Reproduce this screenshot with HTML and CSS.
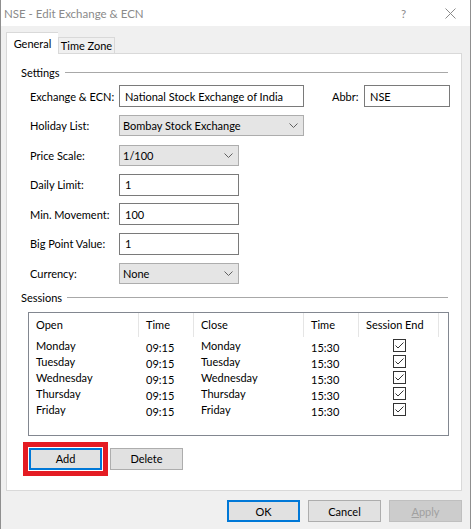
FILE: index.html
```html
<!DOCTYPE html>
<html>
<head>
<meta charset="utf-8">
<link rel="stylesheet" href="styles.css">
</head>
<body>
<div class="window">
  <div class="titlebar">
    <span class="title">NSE - Edit Exchange &amp; ECN</span>
    <span class="help">?</span>
    <span class="close"><svg width="11" height="11" viewBox="0 0 11 11"><path d="M0.5 0.5 L10.5 10.5 M10.5 0.5 L0.5 10.5" stroke="#8a8a8a" stroke-width="1" fill="none"/></svg></span>
  </div>
  <div class="tabs">
    <div class="tab active">General</div>
    <div class="tab">Time Zone</div>
  </div>
  <div class="panel">
    <div class="group-head"><span>Settings</span><span class="rule"></span></div>
    <div class="form">
      <div class="row">
        <label class="lbl">Exchange &amp; ECN:</label>
        <div class="field wide">National Stock Exchange of India</div>
        <label class="abbr-lbl">Abbr:</label>
        <div class="field abbr">NSE</div>
      </div>
      <div class="row">
        <label class="lbl">Holiday List:</label>
        <div class="combo wide"><span>Bombay Stock Exchange</span><svg width="9" height="5" viewBox="0 0 9 5"><path d="M0.5 0.5 L4.5 4.5 L8.5 0.5" stroke="#606060" fill="none"/></svg></div>
      </div>
      <div class="row">
        <label class="lbl">Price Scale:</label>
        <div class="combo narrow"><span>1/100</span><svg width="9" height="5" viewBox="0 0 9 5"><path d="M0.5 0.5 L4.5 4.5 L8.5 0.5" stroke="#606060" fill="none"/></svg></div>
      </div>
      <div class="row">
        <label class="lbl">Daily Limit:</label>
        <div class="field narrow">1</div>
      </div>
      <div class="row">
        <label class="lbl">Min. Movement:</label>
        <div class="field narrow">100</div>
      </div>
      <div class="row">
        <label class="lbl">Big Point Value:</label>
        <div class="field narrow">1</div>
      </div>
      <div class="row">
        <label class="lbl">Currency:</label>
        <div class="combo narrow"><span>None</span><svg width="9" height="5" viewBox="0 0 9 5"><path d="M0.5 0.5 L4.5 4.5 L8.5 0.5" stroke="#606060" fill="none"/></svg></div>
      </div>
    </div>
    <div class="group-head sessions-head"><span>Sessions</span><span class="rule"></span></div>
    <div class="table">
      <div class="thead">
        <div class="th">Open</div>
        <div class="th">Time</div>
        <div class="th">Close</div>
        <div class="th">Time</div>
        <div class="th">Session End</div>
      </div>
      <div class="tr"><div class="td">Monday</div><div class="td t">09:15</div><div class="td">Monday</div><div class="td t">15:30</div><div class="td c"><svg class="cb" width="13" height="13" viewBox="0 0 13 13"><rect x="0.5" y="0.5" width="12" height="12" fill="#fff" stroke="#333"/><path d="M2.5 6.5 L5 9 L10.5 3.5" stroke="#333" fill="none"/></svg></div></div>
      <div class="tr"><div class="td">Tuesday</div><div class="td t">09:15</div><div class="td">Tuesday</div><div class="td t">15:30</div><div class="td c"><svg class="cb" width="13" height="13" viewBox="0 0 13 13"><rect x="0.5" y="0.5" width="12" height="12" fill="#fff" stroke="#333"/><path d="M2.5 6.5 L5 9 L10.5 3.5" stroke="#333" fill="none"/></svg></div></div>
      <div class="tr"><div class="td">Wednesday</div><div class="td t">09:15</div><div class="td">Wednesday</div><div class="td t">15:30</div><div class="td c"><svg class="cb" width="13" height="13" viewBox="0 0 13 13"><rect x="0.5" y="0.5" width="12" height="12" fill="#fff" stroke="#333"/><path d="M2.5 6.5 L5 9 L10.5 3.5" stroke="#333" fill="none"/></svg></div></div>
      <div class="tr"><div class="td">Thursday</div><div class="td t">09:15</div><div class="td">Thursday</div><div class="td t">15:30</div><div class="td c"><svg class="cb" width="13" height="13" viewBox="0 0 13 13"><rect x="0.5" y="0.5" width="12" height="12" fill="#fff" stroke="#333"/><path d="M2.5 6.5 L5 9 L10.5 3.5" stroke="#333" fill="none"/></svg></div></div>
      <div class="tr"><div class="td">Friday</div><div class="td t">09:15</div><div class="td">Friday</div><div class="td t">15:30</div><div class="td c"><svg class="cb" width="13" height="13" viewBox="0 0 13 13"><rect x="0.5" y="0.5" width="12" height="12" fill="#fff" stroke="#333"/><path d="M2.5 6.5 L5 9 L10.5 3.5" stroke="#333" fill="none"/></svg></div></div>
    </div>
    <div class="table-buttons">
      <div class="btn default highlight">Add</div>
      <div class="btn">Delete</div>
    </div>
  </div>
  <div class="footer">
    <div class="btn default">OK</div>
    <div class="btn">Cancel</div>
    <div class="btn disabled"><u>A</u>pply</div>
  </div>
</div>
</body>
</html>
```
FILE: styles.css
```css
* { box-sizing: border-box; }
body {
  margin: 0;
  font-family: Lato, "Noto Sans", sans-serif;
  font-size: 11px;
  color: #000;
  background: #f0f0f0;
  white-space: nowrap;
}
.window {
  width: 471px;
  height: 529px;
  background: #f0f0f0;
  border-left: 1px solid #8f8f8f;
  border-right: 1px solid #8f8f8f;
  display: flex;
  flex-direction: column;
}
.titlebar {
  height: 26px;
  background: #fff;
  display: flex;
  align-items: center;
  padding-left: 3px;
  color: #8a8a8a;
  font-size: 11.5px;
}
.title { flex: 1; }
.help { width: 10px; margin-right: 34px; }
.close { width: 11px; margin-right: 14px; display: flex; }
.tabs {
  margin-top: 6px;
  margin-left: 5px;
  display: flex;
  align-items: flex-end;
  height: 21px;
}
.tab {
  height: 16px;
  width: 57px;
  border: 1px solid #d9d9d9;
  border-bottom: none;
  background: #f0f0f0;
  display: flex;
  align-items: center;
  justify-content: center;
}
.tab.active {
  height: 22px;
  width: 52px;
  margin-bottom: -1px;
  background: #fff;
  border-right: none;
  position: relative;
  z-index: 1;
}
.panel {
  margin-left: 5px;
  width: 456px;
  height: 438px;
  background: #fff;
  border: 1px solid #d9d9d9;
  display: flex;
  flex-direction: column;
}
.group-head {
  margin-top: 11px;
  height: 14px;
  display: flex;
  align-items: center;
  padding: 0 13px 0 14px;
  gap: 5px;
}
.group-head .rule {
  flex: 1;
  height: 1px;
  background: #a8a8a8;
}
.form {
  margin-top: 6px;
  padding-left: 23px;
  display: flex;
  flex-direction: column;
  gap: 7.6px;
}
.row {
  display: flex;
  align-items: center;
  height: 22px;
}
.lbl { width: 89px; }
.abbr-lbl { margin-left: 28px; width: 32px; }
.field {
  height: 22px;
  border: 1px solid #7a7a7a;
  background: #fff;
  padding-left: 5px;
  display: flex;
  align-items: center;
}
.combo {
  height: 21px;
  border: 1px solid #adadad;
  background: #e5e5e5;
  padding: 0 5px 0 3px;
  display: flex;
  align-items: center;
  justify-content: space-between;
}
.wide { width: 185px; }
.narrow { width: 120px; }
.abbr { width: 86px; }
.sessions-head { margin-top: 6px; }
.table {
  margin: 7px 0 0 21px;
  width: 421px;
  height: 124px;
  border: 1px solid #828790;
}
.thead, .tr {
  display: grid;
  grid-template-columns: 110px 55px 110px 55px 80px 1fr;
}
.thead { height: 24px; }
.th {
  padding-left: 7px;
  display: flex;
  align-items: center;
  border-right: 1px solid #e5e5e5;
}
.tr { height: 16px; }
.td {
  padding-left: 7px;
  display: flex;
  align-items: center;
}
.td.t { padding-top: 4px; }
.td.c { padding-left: 34px; }
.table-buttons {
  margin: 12px 0 0 22px;
  display: flex;
  gap: 8px;
}
.btn {
  width: 73px;
  height: 22px;
  border: 1px solid #adadad;
  background: #e1e1e1;
  display: flex;
  align-items: center;
  justify-content: center;
}
.btn.default { border: 2px solid #0078d7; }
.btn.highlight {
  outline: 5px solid #e41c23;
  outline-offset: 1px;
}
.btn.disabled {
  background: #cccccc;
  border-color: #bfbfbf;
  color: #a0a0a0;
}
.footer {
  margin-top: 9px;
  padding-right: 8px;
  display: flex;
  justify-content: flex-end;
  gap: 8px;
}
```
